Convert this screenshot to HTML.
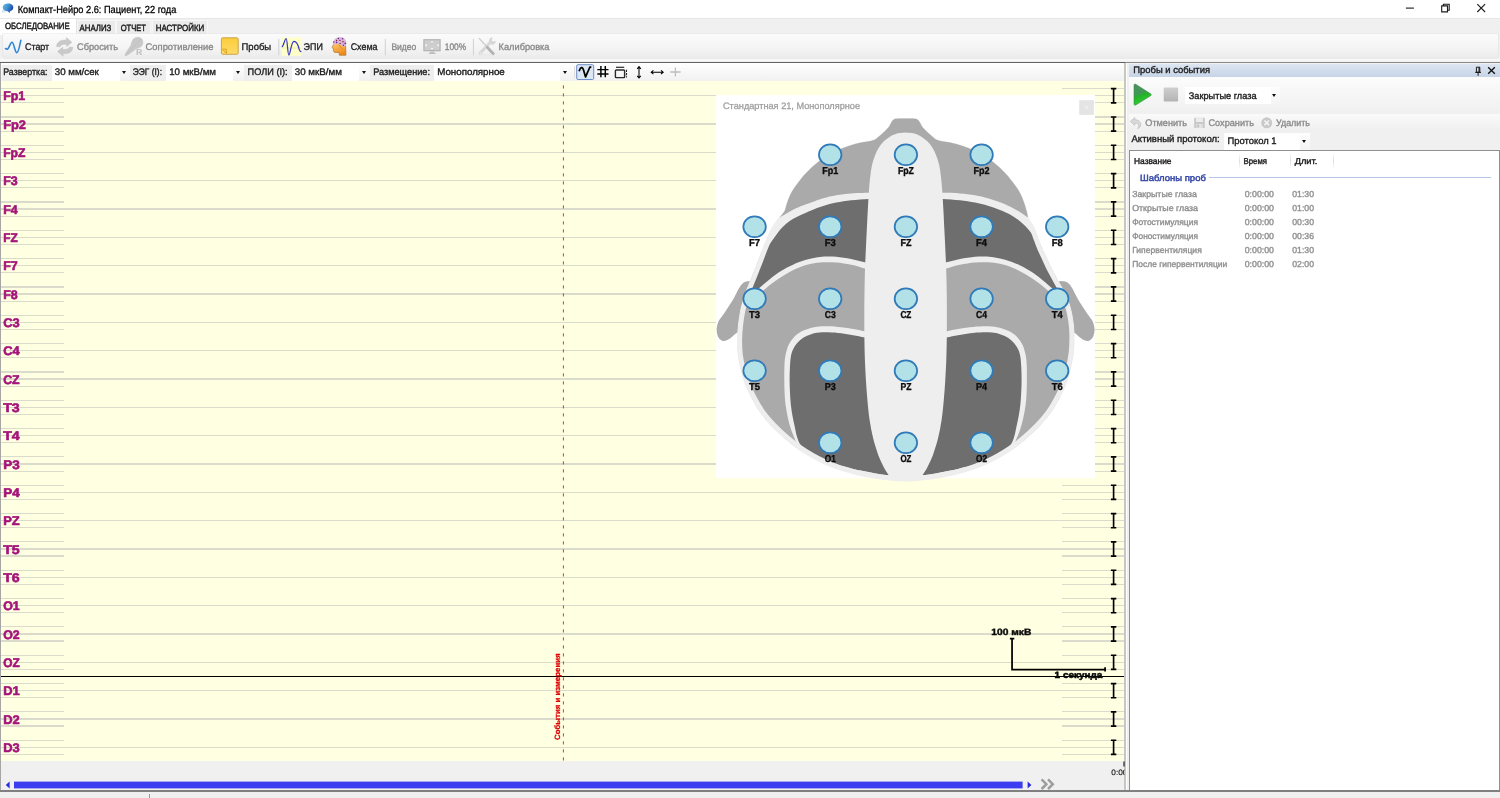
<!DOCTYPE html>
<html lang="ru"><head><meta charset="utf-8"><title>EEG</title>
<style>

html,body{margin:0;padding:0;}
body{width:1500px;height:798px;overflow:hidden;background:#f0f0f0;position:relative;
 font-family:"Liberation Sans",sans-serif;}
.a{position:absolute;}
.txt{will-change:transform;}
.txt text{font-family:"Liberation Sans",sans-serif;text-rendering:geometricPrecision;white-space:pre;stroke-linejoin:round;}
svg{position:absolute;overflow:visible;}
#title{left:0;top:0;width:1500px;height:18px;background:#fff;}
#tabs{left:0;top:18px;width:1500px;height:17px;background:#f0f0f0;}
.tab{position:absolute;top:20.2px;height:13.6px;background:#ebebeb;border:1px solid #f6f6f6;border-bottom:none;box-sizing:border-box;}
#tab0{left:0;top:18.5px;width:76.6px;height:16px;background:#fff;border-right:1px solid #e2e2e2;box-sizing:border-box;}
#tb1{left:2.5px;top:34px;width:1495px;height:24.4px;background:linear-gradient(#fbfbfb,#f4f4f4 60%,#ebebeb);border-radius:0 0 3px 3px;box-shadow:0 0 0 0.6px #e3e3e3;}
#tb1sh{left:0;top:59px;width:1500px;height:2px;background:#f7f7f7;}
#dark{left:0;top:61.5px;width:1125px;height:1.4px;background:#626262;}
#dark2{left:1125px;top:61.5px;width:375px;height:1.4px;background:#8a8a8a;}
#tb2{left:1.1px;top:63px;width:1122.8px;height:17.8px;background:linear-gradient(#ffffff,#f1f1f1);}
.lbl{position:absolute;top:65.3px;height:15.4px;background:#eeeeee;}
.cmb{position:absolute;top:63px;height:17.8px;background:#fff;}
.arr{position:absolute;width:0;height:0;border-left:2.6px solid transparent;border-right:2.6px solid transparent;border-top:3px solid #111;}
#eeg{left:1.2px;top:80.8px;width:1122.6px;height:680.2px;background:#ffffe1;overflow:hidden;}
#eegL{left:0;top:63px;width:1px;height:728px;background:#a6a6a6;}
#eegR{left:1123.8px;top:63px;width:2.1px;height:728px;background:#c7c7c2;}
#gap{left:1125.9px;top:63px;width:1.5px;height:735px;background:#fdfdfd;}
#below{left:1.1px;top:761px;width:1122.8px;height:30px;background:#f0f0f0;}
#botline{left:0;top:790px;width:1500px;height:1.7px;background:#808080;}
#status{left:0;top:791.7px;width:1500px;height:6.3px;background:#f0f0f0;}
.hl{position:absolute;left:0;width:1122.8px;height:1.2px;background:#dbdbcb;}
.sl{position:absolute;left:0;width:62.8px;height:1.2px;background:#dbdbcb;}
.sr{position:absolute;left:1060.8px;width:62px;height:1.2px;background:#dbdbcb;}
#panel{left:714.8px;top:14.2px;width:378.6px;height:383.4px;background:#fff;}
#rp{left:1128px;top:63px;width:372px;height:735px;background:#f0f0f0;}
#rphead{left:1129px;top:64px;width:371px;height:13px;background:linear-gradient(#dde6f1,#c6d4e6);}
#rptop{left:1129px;top:77px;width:371px;height:36px;background:linear-gradient(#fcfcfc,#f0f0f0);}
#rptb{left:1129px;top:114px;width:371px;height:17px;background:linear-gradient(#fafafa,#efefef);}
#list{left:1128.5px;top:149.6px;width:371.5px;height:641px;background:#fff;border:1px solid #8f8f8f;border-bottom:none;box-sizing:border-box;}
.colsep{position:absolute;top:153px;width:1px;height:16px;background:linear-gradient(#fff,#dcdcdc,#fff);}

</style></head>
<body>

<div class="a" id="title"></div>
<div class="a" id="tabs"></div>
<div class="tab" style="left:77px;width:38.6px"></div>
<div class="tab" style="left:116.4px;width:35px"></div>
<div class="tab" style="left:152px;width:55.8px"></div>
<div class="a" id="tab0"></div>
<div class="a" style="left:0;top:18px;width:1500px;height:1px;background:#e7e7e7"></div>
<div class="a" id="tb1"></div>
<div class="a" id="tb1sh"></div>
<div class="a" id="dark"></div><div class="a" id="dark2"></div>
<div class="a" id="tb2"></div>
<div class="lbl" style="left:2px;width:50px"></div>
<div class="cmb" style="left:52px;width:68px"></div>
<div class="lbl" style="left:130px;width:36px"></div>
<div class="cmb" style="left:166px;width:67px"></div>
<div class="lbl" style="left:244px;width:48px"></div>
<div class="cmb" style="left:292px;width:67px"></div>
<div class="lbl" style="left:370px;width:64px"></div>
<div class="cmb" style="left:434px;width:126px"></div>
<div class="arr" style="left:122.2px;top:71px"></div>
<div class="arr" style="left:236.4px;top:71px"></div>
<div class="arr" style="left:362.2px;top:71px"></div>
<div class="arr" style="left:563.4px;top:71px"></div>

<div class="a" id="eeg">
<div class="hl" style="top:14.32px"></div>
<div class="sl" style="top:7.22px"></div>
<div class="sr" style="top:7.22px"></div>
<div class="sl" style="top:21.42px"></div>
<div class="sr" style="top:21.42px"></div>
<div class="hl" style="top:42.65px"></div>
<div class="sl" style="top:35.55px"></div>
<div class="sr" style="top:35.55px"></div>
<div class="sl" style="top:49.75px"></div>
<div class="sr" style="top:49.75px"></div>
<div class="hl" style="top:70.98px"></div>
<div class="sl" style="top:63.88px"></div>
<div class="sr" style="top:63.88px"></div>
<div class="sl" style="top:78.08px"></div>
<div class="sr" style="top:78.08px"></div>
<div class="hl" style="top:99.31px"></div>
<div class="sl" style="top:92.21px"></div>
<div class="sr" style="top:92.21px"></div>
<div class="sl" style="top:106.41px"></div>
<div class="sr" style="top:106.41px"></div>
<div class="hl" style="top:127.64px"></div>
<div class="sl" style="top:120.54px"></div>
<div class="sr" style="top:120.54px"></div>
<div class="sl" style="top:134.74px"></div>
<div class="sr" style="top:134.74px"></div>
<div class="hl" style="top:155.97px"></div>
<div class="sl" style="top:148.87px"></div>
<div class="sr" style="top:148.87px"></div>
<div class="sl" style="top:163.07px"></div>
<div class="sr" style="top:163.07px"></div>
<div class="hl" style="top:184.30px"></div>
<div class="sl" style="top:177.20px"></div>
<div class="sr" style="top:177.20px"></div>
<div class="sl" style="top:191.40px"></div>
<div class="sr" style="top:191.40px"></div>
<div class="hl" style="top:212.63px"></div>
<div class="sl" style="top:205.53px"></div>
<div class="sr" style="top:205.53px"></div>
<div class="sl" style="top:219.73px"></div>
<div class="sr" style="top:219.73px"></div>
<div class="hl" style="top:240.96px"></div>
<div class="sl" style="top:233.86px"></div>
<div class="sr" style="top:233.86px"></div>
<div class="sl" style="top:248.06px"></div>
<div class="sr" style="top:248.06px"></div>
<div class="hl" style="top:269.29px"></div>
<div class="sl" style="top:262.19px"></div>
<div class="sr" style="top:262.19px"></div>
<div class="sl" style="top:276.39px"></div>
<div class="sr" style="top:276.39px"></div>
<div class="hl" style="top:297.62px"></div>
<div class="sl" style="top:290.52px"></div>
<div class="sr" style="top:290.52px"></div>
<div class="sl" style="top:304.72px"></div>
<div class="sr" style="top:304.72px"></div>
<div class="hl" style="top:325.95px"></div>
<div class="sl" style="top:318.85px"></div>
<div class="sr" style="top:318.85px"></div>
<div class="sl" style="top:333.05px"></div>
<div class="sr" style="top:333.05px"></div>
<div class="hl" style="top:354.28px"></div>
<div class="sl" style="top:347.18px"></div>
<div class="sr" style="top:347.18px"></div>
<div class="sl" style="top:361.38px"></div>
<div class="sr" style="top:361.38px"></div>
<div class="hl" style="top:382.61px"></div>
<div class="sl" style="top:375.51px"></div>
<div class="sr" style="top:375.51px"></div>
<div class="sl" style="top:389.71px"></div>
<div class="sr" style="top:389.71px"></div>
<div class="hl" style="top:410.94px"></div>
<div class="sl" style="top:403.84px"></div>
<div class="sr" style="top:403.84px"></div>
<div class="sl" style="top:418.04px"></div>
<div class="sr" style="top:418.04px"></div>
<div class="hl" style="top:439.27px"></div>
<div class="sl" style="top:432.17px"></div>
<div class="sr" style="top:432.17px"></div>
<div class="sl" style="top:446.37px"></div>
<div class="sr" style="top:446.37px"></div>
<div class="hl" style="top:467.60px"></div>
<div class="sl" style="top:460.50px"></div>
<div class="sr" style="top:460.50px"></div>
<div class="sl" style="top:474.70px"></div>
<div class="sr" style="top:474.70px"></div>
<div class="hl" style="top:495.93px"></div>
<div class="sl" style="top:488.83px"></div>
<div class="sr" style="top:488.83px"></div>
<div class="sl" style="top:503.03px"></div>
<div class="sr" style="top:503.03px"></div>
<div class="hl" style="top:524.26px"></div>
<div class="sl" style="top:517.16px"></div>
<div class="sr" style="top:517.16px"></div>
<div class="sl" style="top:531.36px"></div>
<div class="sr" style="top:531.36px"></div>
<div class="hl" style="top:552.59px"></div>
<div class="sl" style="top:545.49px"></div>
<div class="sr" style="top:545.49px"></div>
<div class="sl" style="top:559.69px"></div>
<div class="sr" style="top:559.69px"></div>
<div class="hl" style="top:580.92px"></div>
<div class="sl" style="top:573.82px"></div>
<div class="sr" style="top:573.82px"></div>
<div class="sl" style="top:588.02px"></div>
<div class="sr" style="top:588.02px"></div>
<div class="hl" style="top:609.25px"></div>
<div class="sl" style="top:602.15px"></div>
<div class="sr" style="top:602.15px"></div>
<div class="sl" style="top:616.35px"></div>
<div class="sr" style="top:616.35px"></div>
<div class="hl" style="top:637.58px"></div>
<div class="sl" style="top:630.48px"></div>
<div class="sr" style="top:630.48px"></div>
<div class="sl" style="top:644.68px"></div>
<div class="sr" style="top:644.68px"></div>
<div class="hl" style="top:665.91px"></div>
<div class="sl" style="top:658.81px"></div>
<div class="sr" style="top:658.81px"></div>
<div class="sl" style="top:673.01px"></div>
<div class="sr" style="top:673.01px"></div>
<div class="a" style="left:0;top:594.75px;width:1123px;height:1.9px;background:#000"></div>
<div class="a" id="panel"></div>
</div>
<div class="a" id="below"></div>
<div class="a" id="eegL"></div>
<div class="a" id="eegR"></div>
<svg class="a" style="left:0;top:0" width="1500" height="798" viewBox="0 0 1500 798">
<g stroke="#000" stroke-width="1.65" fill="none">
<path d="M1110.90 88.62H1116.30M1110.90 102.82H1116.30M1113.60 88.62V102.82"/>
<path d="M1110.90 116.95H1116.30M1110.90 131.15H1116.30M1113.60 116.95V131.15"/>
<path d="M1110.90 145.28H1116.30M1110.90 159.48H1116.30M1113.60 145.28V159.48"/>
<path d="M1110.90 173.61H1116.30M1110.90 187.81H1116.30M1113.60 173.61V187.81"/>
<path d="M1110.90 201.94H1116.30M1110.90 216.14H1116.30M1113.60 201.94V216.14"/>
<path d="M1110.90 230.27H1116.30M1110.90 244.47H1116.30M1113.60 230.27V244.47"/>
<path d="M1110.90 258.60H1116.30M1110.90 272.80H1116.30M1113.60 258.60V272.80"/>
<path d="M1110.90 286.93H1116.30M1110.90 301.13H1116.30M1113.60 286.93V301.13"/>
<path d="M1110.90 315.26H1116.30M1110.90 329.46H1116.30M1113.60 315.26V329.46"/>
<path d="M1110.90 343.59H1116.30M1110.90 357.79H1116.30M1113.60 343.59V357.79"/>
<path d="M1110.90 371.92H1116.30M1110.90 386.12H1116.30M1113.60 371.92V386.12"/>
<path d="M1110.90 400.25H1116.30M1110.90 414.45H1116.30M1113.60 400.25V414.45"/>
<path d="M1110.90 428.58H1116.30M1110.90 442.78H1116.30M1113.60 428.58V442.78"/>
<path d="M1110.90 456.91H1116.30M1110.90 471.11H1116.30M1113.60 456.91V471.11"/>
<path d="M1110.90 485.24H1116.30M1110.90 499.44H1116.30M1113.60 485.24V499.44"/>
<path d="M1110.90 513.57H1116.30M1110.90 527.77H1116.30M1113.60 513.57V527.77"/>
<path d="M1110.90 541.90H1116.30M1110.90 556.10H1116.30M1113.60 541.90V556.10"/>
<path d="M1110.90 570.23H1116.30M1110.90 584.43H1116.30M1113.60 570.23V584.43"/>
<path d="M1110.90 598.56H1116.30M1110.90 612.76H1116.30M1113.60 598.56V612.76"/>
<path d="M1110.90 626.89H1116.30M1110.90 641.09H1116.30M1113.60 626.89V641.09"/>
<path d="M1110.90 655.22H1116.30M1110.90 669.42H1116.30M1113.60 655.22V669.42"/>
<path d="M1110.90 683.55H1116.30M1110.90 697.75H1116.30M1113.60 683.55V697.75"/>
<path d="M1110.90 711.88H1116.30M1110.90 726.08H1116.30M1113.60 711.88V726.08"/>
<path d="M1110.90 740.21H1116.30M1110.90 754.41H1116.30M1113.60 740.21V754.41"/>
</g></svg>

<svg class="a" style="left:0;top:0" width="1500" height="798" viewBox="0 0 1500 798">
<defs><clipPath id="hc"><path d="M905.6 118.6C908.1 118.6 911.0 118.4 913.0 118.6C915.0 118.8 916.3 118.8 917.5 119.6C918.7 120.4 919.4 121.9 920.3 123.2C921.2 124.5 921.7 126.2 922.8 127.6C923.9 129.0 925.5 130.4 927.0 131.8C928.5 133.2 930.2 134.8 932.0 136.2C933.8 137.6 935.0 139.2 938.0 140.3C941.0 141.4 945.9 141.7 950.0 142.6C954.1 143.5 958.5 144.6 962.7 146.0C966.9 147.4 970.8 149.0 975.0 151.0C979.2 153.0 983.8 155.4 987.7 158.0C991.6 160.6 995.5 163.8 998.5 166.5C1001.5 169.2 1003.9 171.8 1006.0 174.0C1008.1 176.2 1009.4 178.0 1011.0 180.0C1012.6 182.0 1014.2 184.0 1015.6 186.0C1017.0 188.0 1018.4 190.0 1019.5 192.0C1020.6 194.0 1021.5 196.0 1022.3 198.0C1023.1 200.0 1023.8 201.8 1024.5 204.0C1025.2 206.2 1026.0 208.7 1026.6 211.0C1027.2 213.3 1027.4 215.7 1028.1 217.6C1028.8 219.5 1030.0 220.8 1031.0 222.6C1032.0 224.3 1033.0 225.5 1034.2 228.1C1035.4 230.7 1036.7 234.6 1037.9 237.9C1039.2 241.2 1040.3 244.4 1041.7 247.7C1043.1 250.9 1044.7 254.1 1046.2 257.4C1047.7 260.6 1049.2 264.2 1050.7 267.2C1052.2 270.2 1053.7 272.7 1055.2 275.5C1056.7 278.3 1058.2 281.1 1059.7 283.8C1061.2 286.6 1062.8 289.2 1064.2 292.0C1065.6 294.8 1066.8 297.0 1068.0 300.5C1069.2 304.0 1070.6 308.6 1071.5 313.0C1072.4 317.4 1073.2 322.5 1073.6 327.0C1074.0 331.5 1074.1 335.3 1074.0 340.0C1073.9 344.7 1073.7 350.0 1073.0 355.0C1072.3 360.0 1071.3 365.0 1070.0 370.0C1068.7 375.0 1067.3 380.1 1065.4 385.0C1063.5 389.9 1061.0 394.8 1058.5 399.5C1056.0 404.2 1053.7 408.4 1050.4 413.0C1047.1 417.6 1042.7 422.6 1038.5 427.0C1034.3 431.4 1029.2 436.0 1025.0 439.6C1020.8 443.2 1017.2 446.0 1013.0 448.9C1008.8 451.8 1004.2 454.7 1000.0 457.1C995.8 459.5 992.2 461.4 988.0 463.3C983.8 465.2 979.3 467.1 975.0 468.6C970.7 470.2 966.2 471.4 962.0 472.6C957.8 473.8 954.2 474.7 950.0 475.6C945.8 476.5 941.2 477.3 937.0 478.0C932.8 478.7 930.2 479.1 925.0 479.6C919.8 480.1 912.1 481.0 905.6 481.0C899.1 481.0 891.4 480.1 886.2 479.6C881.0 479.1 878.4 478.7 874.2 478.0C870.0 477.3 865.4 476.5 861.2 475.6C857.0 474.7 853.4 473.8 849.2 472.6C845.0 471.4 840.5 470.2 836.2 468.6C831.9 467.1 827.4 465.2 823.2 463.3C819.0 461.4 815.4 459.5 811.2 457.1C807.0 454.7 802.4 451.8 798.2 448.9C794.0 446.0 790.5 443.2 786.2 439.6C782.0 436.0 776.9 431.4 772.7 427.0C768.5 422.6 764.1 417.6 760.8 413.0C757.5 408.4 755.2 404.2 752.7 399.5C750.2 394.8 747.7 389.9 745.8 385.0C743.9 380.1 742.5 375.0 741.2 370.0C739.9 365.0 738.8 360.0 738.2 355.0C737.6 350.0 737.4 345.2 737.5 340.0C737.6 334.8 738.0 329.2 738.6 324.0C739.2 318.8 740.0 313.7 741.0 309.0C742.0 304.3 743.3 299.9 744.6 296.0C745.9 292.1 747.3 288.6 748.6 285.3C749.9 282.0 751.2 278.8 752.3 276.2C753.3 273.6 754.0 271.8 754.9 269.5C755.8 267.2 756.5 265.4 757.6 262.7C758.7 259.9 760.0 256.2 761.3 253.0C762.5 249.8 764.0 245.9 765.1 243.2C766.2 240.4 767.0 238.8 768.0 236.5C769.0 234.2 769.9 231.9 771.1 229.6C772.4 227.3 774.1 224.5 775.5 222.5C776.9 220.5 777.9 219.5 779.4 217.6C780.9 215.7 783.4 213.3 784.6 211.0C785.8 208.7 786.0 206.2 786.7 204.0C787.4 201.8 788.1 200.0 788.9 198.0C789.7 196.0 790.6 194.0 791.7 192.0C792.8 190.0 794.2 188.0 795.6 186.0C797.0 184.0 798.6 182.0 800.2 180.0C801.8 178.0 803.1 176.2 805.2 174.0C807.3 171.8 809.7 169.2 812.7 166.5C815.8 163.8 819.6 160.6 823.5 158.0C827.4 155.4 832.0 153.0 836.2 151.0C840.4 149.0 844.3 147.4 848.5 146.0C852.7 144.6 857.1 143.5 861.2 142.6C865.3 141.7 870.2 141.4 873.2 140.3C876.2 139.2 877.4 137.6 879.2 136.2C881.0 134.8 882.7 133.2 884.2 131.8C885.7 130.4 887.3 129.0 888.4 127.6C889.5 126.2 890.0 124.5 890.9 123.2C891.8 121.9 892.5 120.4 893.7 119.6C894.9 118.8 896.2 118.8 898.2 118.6C900.2 118.4 903.1 118.6 905.6 118.6Z"/></clipPath></defs>
<path d="M1058.0 283.0C1059.3 279.9 1062.0 281.1 1063.8 281.2C1065.6 281.3 1067.2 282.2 1068.6 283.4C1070.0 284.6 1070.9 286.0 1072.4 288.6C1073.9 291.2 1075.6 295.2 1077.8 299.0C1080.0 302.8 1083.5 308.0 1085.8 311.4C1088.1 314.8 1090.2 317.3 1091.6 319.6C1093.0 321.9 1093.5 323.5 1094.0 325.4C1094.5 327.3 1094.7 329.1 1094.5 331.0C1094.3 332.9 1093.8 335.4 1093.0 337.0C1092.2 338.6 1090.9 339.8 1089.6 340.4C1088.3 341.0 1086.6 341.1 1085.0 340.6C1083.4 340.1 1081.7 338.9 1080.0 337.6C1078.3 336.3 1076.6 334.3 1074.6 333.0C1072.6 331.7 1070.4 332.2 1068.0 330.0C1065.6 327.8 1062.0 325.0 1060.0 320.0C1058.0 315.0 1056.3 306.2 1056.0 300.0C1055.7 293.8 1056.7 286.1 1058.0 283.0Z" fill="#aaaaaa"/><path d="M753.2 283.0C751.9 279.9 749.2 281.1 747.4 281.2C745.6 281.3 744.0 282.2 742.6 283.4C741.2 284.6 740.3 286.0 738.8 288.6C737.3 291.2 735.6 295.2 733.4 299.0C731.2 302.8 727.7 308.0 725.4 311.4C723.1 314.8 721.0 317.3 719.6 319.6C718.2 321.9 717.7 323.5 717.2 325.4C716.7 327.3 716.5 329.1 716.7 331.0C716.9 332.9 717.4 335.4 718.2 337.0C719.0 338.6 720.3 339.8 721.6 340.4C722.9 341.0 724.6 341.1 726.2 340.6C727.8 340.1 729.5 338.9 731.2 337.6C732.9 336.3 734.6 334.3 736.6 333.0C738.6 331.7 740.8 332.2 743.2 330.0C745.6 327.8 749.2 325.0 751.2 320.0C753.2 315.0 754.9 306.2 755.2 300.0C755.5 293.8 754.5 286.1 753.2 283.0Z" fill="#aaaaaa"/>
<path d="M905.6 118.6C908.1 118.6 911.0 118.4 913.0 118.6C915.0 118.8 916.3 118.8 917.5 119.6C918.7 120.4 919.4 121.9 920.3 123.2C921.2 124.5 921.7 126.2 922.8 127.6C923.9 129.0 925.5 130.4 927.0 131.8C928.5 133.2 930.2 134.8 932.0 136.2C933.8 137.6 935.0 139.2 938.0 140.3C941.0 141.4 945.9 141.7 950.0 142.6C954.1 143.5 958.5 144.6 962.7 146.0C966.9 147.4 970.8 149.0 975.0 151.0C979.2 153.0 983.8 155.4 987.7 158.0C991.6 160.6 995.5 163.8 998.5 166.5C1001.5 169.2 1003.9 171.8 1006.0 174.0C1008.1 176.2 1009.4 178.0 1011.0 180.0C1012.6 182.0 1014.2 184.0 1015.6 186.0C1017.0 188.0 1018.4 190.0 1019.5 192.0C1020.6 194.0 1021.5 196.0 1022.3 198.0C1023.1 200.0 1023.8 201.8 1024.5 204.0C1025.2 206.2 1026.0 208.7 1026.6 211.0C1027.2 213.3 1027.4 215.7 1028.1 217.6C1028.8 219.5 1030.0 220.8 1031.0 222.6C1032.0 224.3 1033.0 225.5 1034.2 228.1C1035.4 230.7 1036.7 234.6 1037.9 237.9C1039.2 241.2 1040.3 244.4 1041.7 247.7C1043.1 250.9 1044.7 254.1 1046.2 257.4C1047.7 260.6 1049.2 264.2 1050.7 267.2C1052.2 270.2 1053.7 272.7 1055.2 275.5C1056.7 278.3 1058.2 281.1 1059.7 283.8C1061.2 286.6 1062.8 289.2 1064.2 292.0C1065.6 294.8 1066.8 297.0 1068.0 300.5C1069.2 304.0 1070.6 308.6 1071.5 313.0C1072.4 317.4 1073.2 322.5 1073.6 327.0C1074.0 331.5 1074.1 335.3 1074.0 340.0C1073.9 344.7 1073.7 350.0 1073.0 355.0C1072.3 360.0 1071.3 365.0 1070.0 370.0C1068.7 375.0 1067.3 380.1 1065.4 385.0C1063.5 389.9 1061.0 394.8 1058.5 399.5C1056.0 404.2 1053.7 408.4 1050.4 413.0C1047.1 417.6 1042.7 422.6 1038.5 427.0C1034.3 431.4 1029.2 436.0 1025.0 439.6C1020.8 443.2 1017.2 446.0 1013.0 448.9C1008.8 451.8 1004.2 454.7 1000.0 457.1C995.8 459.5 992.2 461.4 988.0 463.3C983.8 465.2 979.3 467.1 975.0 468.6C970.7 470.2 966.2 471.4 962.0 472.6C957.8 473.8 954.2 474.7 950.0 475.6C945.8 476.5 941.2 477.3 937.0 478.0C932.8 478.7 930.2 479.1 925.0 479.6C919.8 480.1 912.1 481.0 905.6 481.0C899.1 481.0 891.4 480.1 886.2 479.6C881.0 479.1 878.4 478.7 874.2 478.0C870.0 477.3 865.4 476.5 861.2 475.6C857.0 474.7 853.4 473.8 849.2 472.6C845.0 471.4 840.5 470.2 836.2 468.6C831.9 467.1 827.4 465.2 823.2 463.3C819.0 461.4 815.4 459.5 811.2 457.1C807.0 454.7 802.4 451.8 798.2 448.9C794.0 446.0 790.5 443.2 786.2 439.6C782.0 436.0 776.9 431.4 772.7 427.0C768.5 422.6 764.1 417.6 760.8 413.0C757.5 408.4 755.2 404.2 752.7 399.5C750.2 394.8 747.7 389.9 745.8 385.0C743.9 380.1 742.5 375.0 741.2 370.0C739.9 365.0 738.8 360.0 738.2 355.0C737.6 350.0 737.4 345.2 737.5 340.0C737.6 334.8 738.0 329.2 738.6 324.0C739.2 318.8 740.0 313.7 741.0 309.0C742.0 304.3 743.3 299.9 744.6 296.0C745.9 292.1 747.3 288.6 748.6 285.3C749.9 282.0 751.2 278.8 752.3 276.2C753.3 273.6 754.0 271.8 754.9 269.5C755.8 267.2 756.5 265.4 757.6 262.7C758.7 259.9 760.0 256.2 761.3 253.0C762.5 249.8 764.0 245.9 765.1 243.2C766.2 240.4 767.0 238.8 768.0 236.5C769.0 234.2 769.9 231.9 771.1 229.6C772.4 227.3 774.1 224.5 775.5 222.5C776.9 220.5 777.9 219.5 779.4 217.6C780.9 215.7 783.4 213.3 784.6 211.0C785.8 208.7 786.0 206.2 786.7 204.0C787.4 201.8 788.1 200.0 788.9 198.0C789.7 196.0 790.6 194.0 791.7 192.0C792.8 190.0 794.2 188.0 795.6 186.0C797.0 184.0 798.6 182.0 800.2 180.0C801.8 178.0 803.1 176.2 805.2 174.0C807.3 171.8 809.7 169.2 812.7 166.5C815.8 163.8 819.6 160.6 823.5 158.0C827.4 155.4 832.0 153.0 836.2 151.0C840.4 149.0 844.3 147.4 848.5 146.0C852.7 144.6 857.1 143.5 861.2 142.6C865.3 141.7 870.2 141.4 873.2 140.3C876.2 139.2 877.4 137.6 879.2 136.2C881.0 134.8 882.7 133.2 884.2 131.8C885.7 130.4 887.3 129.0 888.4 127.6C889.5 126.2 890.0 124.5 890.9 123.2C891.8 121.9 892.5 120.4 893.7 119.6C894.9 118.8 896.2 118.8 898.2 118.6C900.2 118.4 903.1 118.6 905.6 118.6Z" fill="#eeeeee"/>
<g clip-path="url(#hc)">
<path d="M930.0 273.5C932.6 272.7 940.6 270.2 945.6 268.8C950.6 267.4 955.1 265.8 960.0 264.8C964.9 263.8 970.3 263.0 975.0 262.6C979.7 262.2 983.8 262.1 988.0 262.3C992.2 262.5 996.0 262.9 1000.0 263.8C1004.0 264.7 1007.8 265.9 1012.0 267.6C1016.2 269.3 1020.3 271.3 1025.0 274.0C1029.7 276.7 1035.8 280.9 1040.0 284.0C1044.2 287.1 1046.3 289.2 1050.0 292.5C1053.7 295.8 1057.3 299.1 1062.0 304.0C1066.7 308.9 1075.3 319.0 1078.0 322.0L1090.0 340.0L1085.0 420.0L1040.0 460.0C1006.9 460.0 1009.9 453.6 1011.5 450.0C1013.1 446.4 1014.4 443.7 1015.8 440.4C1017.2 437.1 1018.8 433.7 1020.0 430.0C1021.2 426.3 1022.4 422.2 1023.3 418.0C1024.2 413.8 1025.0 409.2 1025.6 405.0C1026.1 400.8 1026.4 397.3 1026.6 392.8C1026.8 388.3 1026.9 383.0 1026.9 378.0C1026.9 373.0 1026.9 366.9 1026.6 362.7C1026.3 358.5 1025.9 355.9 1025.2 353.0C1024.5 350.1 1023.9 347.6 1022.6 345.0C1021.3 342.4 1019.5 339.7 1017.5 337.5C1015.5 335.3 1012.9 333.3 1010.3 331.8C1007.7 330.3 1005.0 329.3 1002.0 328.4C999.0 327.5 995.2 327.0 992.0 326.6C988.8 326.2 986.4 326.1 982.7 326.2C979.0 326.3 974.1 326.7 970.0 327.2C965.9 327.7 962.0 328.3 958.0 329.0C954.0 329.7 950.7 330.4 946.0 331.4C941.3 332.4 932.7 334.4 930.0 335.0Z" fill="#aaaaaa"/><path d="M881.2 273.5C878.6 272.7 870.6 270.2 865.6 268.8C860.6 267.4 856.1 265.8 851.2 264.8C846.3 263.8 840.9 263.0 836.2 262.6C831.5 262.2 827.4 262.1 823.2 262.3C819.0 262.5 815.2 262.9 811.2 263.8C807.2 264.7 803.4 265.9 799.2 267.6C795.0 269.3 790.9 271.3 786.2 274.0C781.5 276.7 775.4 280.9 771.2 284.0C767.0 287.1 764.9 289.2 761.2 292.5C757.5 295.8 753.9 299.1 749.2 304.0C744.5 308.9 735.9 319.0 733.2 322.0L721.2 340.0L726.2 420.0L771.2 460.0C804.3 460.0 801.3 453.6 799.7 450.0C798.1 446.4 796.8 443.7 795.4 440.4C794.0 437.1 792.5 433.7 791.2 430.0C790.0 426.3 788.8 422.2 787.9 418.0C787.0 413.8 786.2 409.2 785.6 405.0C785.1 400.8 784.8 397.3 784.6 392.8C784.4 388.3 784.3 383.0 784.3 378.0C784.3 373.0 784.3 366.9 784.6 362.7C784.9 358.5 785.3 355.9 786.0 353.0C786.7 350.1 787.3 347.6 788.6 345.0C789.9 342.4 791.7 339.7 793.7 337.5C795.8 335.3 798.3 333.3 800.9 331.8C803.5 330.3 806.2 329.3 809.2 328.4C812.2 327.5 816.0 327.0 819.2 326.6C822.4 326.2 824.8 326.1 828.5 326.2C832.2 326.3 837.1 326.7 841.2 327.2C845.3 327.7 849.2 328.3 853.2 329.0C857.2 329.7 860.5 330.4 865.2 331.4C869.9 332.4 878.5 334.4 881.2 335.0Z" fill="#aaaaaa"/>
<path d="M930.0 198.6C932.1 198.7 937.6 198.7 942.6 199.0C947.6 199.3 954.6 199.7 960.0 200.3C965.4 200.9 970.3 201.7 975.0 202.6C979.7 203.5 983.8 204.6 988.0 205.8C992.2 207.0 996.3 208.5 1000.0 210.0C1003.7 211.5 1006.8 212.8 1010.0 214.6C1013.2 216.4 1016.0 218.2 1019.0 220.6C1022.0 223.0 1024.5 225.1 1028.0 229.0C1031.5 232.9 1038.0 241.5 1040.0 244.0L1085.0 260.0L1085.0 312.0C1072.8 309.4 1065.7 300.3 1062.0 296.5C1058.3 292.7 1056.2 291.7 1053.0 289.0C1049.8 286.3 1046.2 283.1 1043.0 280.5C1039.8 277.9 1037.0 275.7 1034.0 273.6C1031.0 271.5 1028.7 269.9 1025.0 268.0C1021.3 266.1 1016.2 263.5 1012.0 261.9C1007.8 260.3 1004.2 259.3 1000.0 258.4C995.8 257.5 991.2 256.9 987.0 256.6C982.8 256.3 979.5 256.3 975.0 256.7C970.5 257.1 964.9 258.0 960.0 259.0C955.1 260.0 950.6 261.3 945.6 262.6C940.6 263.9 932.6 266.3 930.0 267.0Z" fill="#6f6e6e"/><path d="M881.2 198.6C879.1 198.7 873.6 198.7 868.6 199.0C863.6 199.3 856.6 199.7 851.2 200.3C845.8 200.9 840.9 201.7 836.2 202.6C831.5 203.5 827.4 204.7 823.2 206.0C819.0 207.3 814.9 208.9 811.2 210.4C807.5 211.9 804.5 213.2 801.2 214.8C797.9 216.4 794.5 217.8 791.2 220.0C787.9 222.2 784.4 225.2 781.5 228.2C778.6 231.2 776.6 234.4 774.0 238.0C771.4 241.6 767.3 248.0 766.0 250.0L726.2 260.0L726.2 312.0C738.4 309.4 745.5 300.3 749.2 296.5C752.9 292.7 755.0 291.7 758.2 289.0C761.4 286.3 765.0 283.1 768.2 280.5C771.4 277.9 774.2 275.7 777.2 273.6C780.2 271.5 782.5 269.9 786.2 268.0C789.9 266.1 795.0 263.5 799.2 261.9C803.4 260.3 807.0 259.3 811.2 258.4C815.4 257.5 820.0 256.9 824.2 256.6C828.4 256.3 831.7 256.3 836.2 256.7C840.7 257.1 846.3 258.0 851.2 259.0C856.1 260.0 860.6 261.3 865.6 262.6C870.6 263.9 878.6 266.3 881.2 267.0Z" fill="#6f6e6e"/>
<path d="M930.0 341.5C932.7 340.9 941.3 338.7 946.0 337.6C950.7 336.6 954.0 335.9 958.0 335.2C962.0 334.5 965.9 333.7 970.0 333.2C974.1 332.7 979.0 332.3 982.7 332.2C986.4 332.1 989.1 332.3 992.0 332.6C994.9 332.9 997.3 333.3 1000.0 334.2C1002.7 335.1 1005.7 336.3 1008.0 337.8C1010.3 339.3 1012.3 341.1 1014.0 343.0C1015.7 344.9 1017.1 347.2 1018.2 349.5C1019.3 351.8 1019.9 353.9 1020.4 357.0C1020.9 360.1 1021.1 364.2 1021.3 368.0C1021.5 371.8 1021.6 375.8 1021.6 380.0C1021.6 384.2 1021.4 388.8 1021.2 393.0C1021.0 397.2 1020.7 401.5 1020.3 405.3C1019.9 409.1 1019.3 412.6 1018.7 416.0C1018.1 419.4 1017.3 422.7 1016.6 426.0C1015.9 429.3 1015.3 433.0 1014.4 436.0C1013.5 439.0 1012.7 441.6 1011.2 444.0C1009.7 446.4 1007.3 448.6 1005.4 450.2C1003.5 451.8 1002.9 452.0 1000.0 453.6C997.1 455.2 992.0 458.2 988.0 460.0C984.0 461.8 980.0 463.0 976.0 464.2C972.0 465.4 968.3 466.3 964.0 467.4C959.7 468.5 954.8 469.6 950.0 470.6C945.2 471.6 940.0 472.7 935.0 473.6C930.0 474.5 924.8 475.3 920.0 475.8C915.2 476.3 908.3 476.6 906.0 476.8L906.0 341.5Z" fill="#6f6e6e"/><path d="M881.2 341.5C878.5 340.9 869.9 338.7 865.2 337.6C860.5 336.6 857.2 335.9 853.2 335.2C849.2 334.5 845.3 333.7 841.2 333.2C837.1 332.7 832.2 332.3 828.5 332.2C824.8 332.1 822.1 332.3 819.2 332.6C816.3 332.9 813.9 333.3 811.2 334.2C808.5 335.1 805.5 336.3 803.2 337.8C800.9 339.3 798.9 341.1 797.2 343.0C795.5 344.9 794.1 347.2 793.0 349.5C791.9 351.8 791.3 353.9 790.8 357.0C790.3 360.1 790.1 364.2 789.9 368.0C789.7 371.8 789.6 375.8 789.6 380.0C789.6 384.2 789.8 388.8 790.0 393.0C790.2 397.2 790.5 401.5 790.9 405.3C791.3 409.1 791.9 412.6 792.5 416.0C793.1 419.4 793.9 422.7 794.6 426.0C795.3 429.3 795.9 433.0 796.8 436.0C797.7 439.0 798.5 441.6 800.0 444.0C801.5 446.4 803.9 448.6 805.8 450.2C807.7 451.8 808.3 452.0 811.2 453.6C814.1 455.2 819.2 458.2 823.2 460.0C827.2 461.8 831.2 463.0 835.2 464.2C839.2 465.4 842.9 466.3 847.2 467.4C851.5 468.5 856.4 469.6 861.2 470.6C866.0 471.6 871.2 472.7 876.2 473.6C881.2 474.5 886.4 475.3 891.2 475.8C896.0 476.3 902.9 476.6 905.2 476.8L905.2 341.5Z" fill="#6f6e6e"/>
<path d="M905.6 118.6C908.1 118.6 911.0 118.4 913.0 118.6C915.0 118.8 916.3 118.8 917.5 119.6C918.7 120.4 919.4 121.9 920.3 123.2C921.2 124.5 921.7 126.2 922.8 127.6C923.9 129.0 925.5 130.4 927.0 131.8C928.5 133.2 930.2 134.8 932.0 136.2C933.8 137.6 935.0 139.2 938.0 140.3C941.0 141.4 945.9 141.7 950.0 142.6C954.1 143.5 958.5 144.6 962.7 146.0C966.9 147.4 970.8 149.0 975.0 151.0C979.2 153.0 983.8 155.4 987.7 158.0C991.6 160.6 995.5 163.8 998.5 166.5C1001.5 169.2 1003.9 171.8 1006.0 174.0C1008.1 176.2 1009.4 178.0 1011.0 180.0C1012.6 182.0 1014.2 184.0 1015.6 186.0C1017.0 188.0 1018.4 190.0 1019.5 192.0C1020.6 194.0 1021.5 196.0 1022.3 198.0C1023.1 200.0 1023.8 201.8 1024.5 204.0C1025.2 206.2 1026.0 208.7 1026.6 211.0C1027.2 213.3 1027.4 215.7 1028.1 217.6C1028.8 219.5 1030.0 220.8 1031.0 222.6C1032.0 224.3 1033.0 225.5 1034.2 228.1C1035.4 230.7 1036.7 234.6 1037.9 237.9C1039.2 241.2 1040.3 244.4 1041.7 247.7C1043.1 250.9 1044.7 254.1 1046.2 257.4C1047.7 260.6 1049.2 264.2 1050.7 267.2C1052.2 270.2 1053.7 272.7 1055.2 275.5C1056.7 278.3 1058.2 281.1 1059.7 283.8C1061.2 286.6 1062.8 289.2 1064.2 292.0C1065.6 294.8 1066.8 297.0 1068.0 300.5C1069.2 304.0 1070.6 308.6 1071.5 313.0C1072.4 317.4 1073.2 322.5 1073.6 327.0C1074.0 331.5 1074.1 335.3 1074.0 340.0C1073.9 344.7 1073.7 350.0 1073.0 355.0C1072.3 360.0 1071.3 365.0 1070.0 370.0C1068.7 375.0 1067.3 380.1 1065.4 385.0C1063.5 389.9 1061.0 394.8 1058.5 399.5C1056.0 404.2 1053.7 408.4 1050.4 413.0C1047.1 417.6 1042.7 422.6 1038.5 427.0C1034.3 431.4 1029.2 436.0 1025.0 439.6C1020.8 443.2 1017.2 446.0 1013.0 448.9C1008.8 451.8 1004.2 454.7 1000.0 457.1C995.8 459.5 992.2 461.4 988.0 463.3C983.8 465.2 979.3 467.1 975.0 468.6C970.7 470.2 966.2 471.4 962.0 472.6C957.8 473.8 954.2 474.7 950.0 475.6C945.8 476.5 941.2 477.3 937.0 478.0C932.8 478.7 930.2 479.1 925.0 479.6C919.8 480.1 912.1 481.0 905.6 481.0C899.1 481.0 891.4 480.1 886.2 479.6C881.0 479.1 878.4 478.7 874.2 478.0C870.0 477.3 865.4 476.5 861.2 475.6C857.0 474.7 853.4 473.8 849.2 472.6C845.0 471.4 840.5 470.2 836.2 468.6C831.9 467.1 827.4 465.2 823.2 463.3C819.0 461.4 815.4 459.5 811.2 457.1C807.0 454.7 802.4 451.8 798.2 448.9C794.0 446.0 790.5 443.2 786.2 439.6C782.0 436.0 776.9 431.4 772.7 427.0C768.5 422.6 764.1 417.6 760.8 413.0C757.5 408.4 755.2 404.2 752.7 399.5C750.2 394.8 747.7 389.9 745.8 385.0C743.9 380.1 742.5 375.0 741.2 370.0C739.9 365.0 738.8 360.0 738.2 355.0C737.6 350.0 737.4 345.2 737.5 340.0C737.6 334.8 738.0 329.2 738.6 324.0C739.2 318.8 740.0 313.7 741.0 309.0C742.0 304.3 743.3 299.9 744.6 296.0C745.9 292.1 747.3 288.6 748.6 285.3C749.9 282.0 751.2 278.8 752.3 276.2C753.3 273.6 754.0 271.8 754.9 269.5C755.8 267.2 756.5 265.4 757.6 262.7C758.7 259.9 760.0 256.2 761.3 253.0C762.5 249.8 764.0 245.9 765.1 243.2C766.2 240.4 767.0 238.8 768.0 236.5C769.0 234.2 769.9 231.9 771.1 229.6C772.4 227.3 774.1 224.5 775.5 222.5C776.9 220.5 777.9 219.5 779.4 217.6C780.9 215.7 783.4 213.3 784.6 211.0C785.8 208.7 786.0 206.2 786.7 204.0C787.4 201.8 788.1 200.0 788.9 198.0C789.7 196.0 790.6 194.0 791.7 192.0C792.8 190.0 794.2 188.0 795.6 186.0C797.0 184.0 798.6 182.0 800.2 180.0C801.8 178.0 803.1 176.2 805.2 174.0C807.3 171.8 809.7 169.2 812.7 166.5C815.8 163.8 819.6 160.6 823.5 158.0C827.4 155.4 832.0 153.0 836.2 151.0C840.4 149.0 844.3 147.4 848.5 146.0C852.7 144.6 857.1 143.5 861.2 142.6C865.3 141.7 870.2 141.4 873.2 140.3C876.2 139.2 877.4 137.6 879.2 136.2C881.0 134.8 882.7 133.2 884.2 131.8C885.7 130.4 887.3 129.0 888.4 127.6C889.5 126.2 890.0 124.5 890.9 123.2C891.8 121.9 892.5 120.4 893.7 119.6C894.9 118.8 896.2 118.8 898.2 118.6C900.2 118.4 903.1 118.6 905.6 118.6Z" fill="none" stroke="#eeeeee" stroke-width="9.2"/>
</g>
<path d="M905.6 118.6C908.1 118.6 911.0 118.4 913.0 118.6C915.0 118.8 916.3 118.8 917.5 119.6C918.7 120.4 919.4 121.9 920.3 123.2C921.2 124.5 921.7 126.2 922.8 127.6C923.9 129.0 925.5 130.4 927.0 131.8C928.5 133.2 930.2 134.8 932.0 136.2C933.8 137.6 935.0 139.2 938.0 140.3C941.0 141.4 945.9 141.7 950.0 142.6C954.1 143.5 958.5 144.6 962.7 146.0C966.9 147.4 970.8 149.0 975.0 151.0C979.2 153.0 983.8 155.4 987.7 158.0C991.6 160.6 995.5 163.8 998.5 166.5C1001.5 169.2 1003.9 171.8 1006.0 174.0C1008.1 176.2 1009.4 178.0 1011.0 180.0C1012.6 182.0 1014.2 184.0 1015.6 186.0C1017.0 188.0 1018.4 190.0 1019.5 192.0C1020.6 194.0 1021.5 196.0 1022.3 198.0C1023.1 200.0 1023.8 201.8 1024.5 204.0C1025.2 206.2 1026.0 208.7 1026.6 211.0C1027.2 213.3 1027.4 215.7 1028.1 217.6C1028.8 219.5 1030.0 220.8 1031.0 222.6C1032.0 224.3 1033.0 225.5 1034.2 228.1C1035.4 230.7 1036.7 234.6 1037.9 237.9C1039.2 241.2 1040.3 244.4 1041.7 247.7C1043.1 250.9 1044.7 254.1 1046.2 257.4C1047.7 260.6 1049.2 264.2 1050.7 267.2C1052.2 270.2 1053.7 272.7 1055.2 275.5C1056.7 278.3 1058.2 281.1 1059.7 283.8C1061.2 286.6 1062.8 289.2 1064.2 292.0C1065.6 294.8 1066.8 297.0 1068.0 300.5C1069.2 304.0 1070.6 308.6 1071.5 313.0C1072.4 317.4 1073.2 322.5 1073.6 327.0C1074.0 331.5 1074.1 335.3 1074.0 340.0C1073.9 344.7 1073.7 350.0 1073.0 355.0C1072.3 360.0 1071.3 365.0 1070.0 370.0C1068.7 375.0 1067.3 380.1 1065.4 385.0C1063.5 389.9 1061.0 394.8 1058.5 399.5C1056.0 404.2 1053.7 408.4 1050.4 413.0C1047.1 417.6 1042.7 422.6 1038.5 427.0C1034.3 431.4 1029.2 436.0 1025.0 439.6C1020.8 443.2 1017.2 446.0 1013.0 448.9C1008.8 451.8 1004.2 454.7 1000.0 457.1C995.8 459.5 992.2 461.4 988.0 463.3C983.8 465.2 979.3 467.1 975.0 468.6C970.7 470.2 966.2 471.4 962.0 472.6C957.8 473.8 954.2 474.7 950.0 475.6C945.8 476.5 941.2 477.3 937.0 478.0C932.8 478.7 930.2 479.1 925.0 479.6C919.8 480.1 912.1 481.0 905.6 481.0C899.1 481.0 891.4 480.1 886.2 479.6C881.0 479.1 878.4 478.7 874.2 478.0C870.0 477.3 865.4 476.5 861.2 475.6C857.0 474.7 853.4 473.8 849.2 472.6C845.0 471.4 840.5 470.2 836.2 468.6C831.9 467.1 827.4 465.2 823.2 463.3C819.0 461.4 815.4 459.5 811.2 457.1C807.0 454.7 802.4 451.8 798.2 448.9C794.0 446.0 790.5 443.2 786.2 439.6C782.0 436.0 776.9 431.4 772.7 427.0C768.5 422.6 764.1 417.6 760.8 413.0C757.5 408.4 755.2 404.2 752.7 399.5C750.2 394.8 747.7 389.9 745.8 385.0C743.9 380.1 742.5 375.0 741.2 370.0C739.9 365.0 738.8 360.0 738.2 355.0C737.6 350.0 737.4 345.2 737.5 340.0C737.6 334.8 738.0 329.2 738.6 324.0C739.2 318.8 740.0 313.7 741.0 309.0C742.0 304.3 743.3 299.9 744.6 296.0C745.9 292.1 747.3 288.6 748.6 285.3C749.9 282.0 751.2 278.8 752.3 276.2C753.3 273.6 754.0 271.8 754.9 269.5C755.8 267.2 756.5 265.4 757.6 262.7C758.7 259.9 760.0 256.2 761.3 253.0C762.5 249.8 764.0 245.9 765.1 243.2C766.2 240.4 767.0 238.8 768.0 236.5C769.0 234.2 769.9 231.9 771.1 229.6C772.4 227.3 774.1 224.5 775.5 222.5C776.9 220.5 777.9 219.5 779.4 217.6C780.9 215.7 783.4 213.3 784.6 211.0C785.8 208.7 786.0 206.2 786.7 204.0C787.4 201.8 788.1 200.0 788.9 198.0C789.7 196.0 790.6 194.0 791.7 192.0C792.8 190.0 794.2 188.0 795.6 186.0C797.0 184.0 798.6 182.0 800.2 180.0C801.8 178.0 803.1 176.2 805.2 174.0C807.3 171.8 809.7 169.2 812.7 166.5C815.8 163.8 819.6 160.6 823.5 158.0C827.4 155.4 832.0 153.0 836.2 151.0C840.4 149.0 844.3 147.4 848.5 146.0C852.7 144.6 857.1 143.5 861.2 142.6C865.3 141.7 870.2 141.4 873.2 140.3C876.2 139.2 877.4 137.6 879.2 136.2C881.0 134.8 882.7 133.2 884.2 131.8C885.7 130.4 887.3 129.0 888.4 127.6C889.5 126.2 890.0 124.5 890.9 123.2C891.8 121.9 892.5 120.4 893.7 119.6C894.9 118.8 896.2 118.8 898.2 118.6C900.2 118.4 903.1 118.6 905.6 118.6Z" fill="none" stroke="#eeeeee" stroke-width="1"/>
<path d="M905.6 118.6C906.8 118.6 911.0 118.4 913.0 118.6C915.0 118.8 916.3 118.8 917.5 119.6C918.7 120.4 919.4 121.9 920.3 123.2C921.2 124.5 921.7 126.2 922.8 127.6C923.9 129.0 925.5 130.4 927.0 131.8C928.5 133.2 930.2 134.8 932.0 136.2C933.8 137.6 935.0 139.2 938.0 140.3C941.0 141.4 945.9 141.7 950.0 142.6C954.1 143.5 958.5 144.6 962.7 146.0C966.9 147.4 970.8 149.0 975.0 151.0C979.2 153.0 983.8 155.4 987.7 158.0C991.6 160.6 995.5 163.8 998.5 166.5C1001.5 169.2 1003.9 171.8 1006.0 174.0C1008.1 176.2 1009.4 178.0 1011.0 180.0C1012.6 182.0 1014.2 184.0 1015.6 186.0C1017.0 188.0 1018.4 190.0 1019.5 192.0C1020.6 194.0 1021.5 196.0 1022.3 198.0C1023.1 200.0 1023.8 201.8 1024.5 204.0C1025.2 206.2 1026.0 208.7 1026.6 211.0C1027.2 213.3 1027.8 216.5 1028.1 217.6C1026.6 216.6 1022.0 213.4 1019.0 211.6C1016.0 209.8 1013.2 208.2 1010.0 206.6C1006.8 205.0 1003.7 203.6 1000.0 202.2C996.3 200.8 992.2 199.4 988.0 198.2C983.8 197.0 979.7 196.0 975.0 195.2C970.3 194.4 965.4 193.8 960.0 193.4C954.6 193.0 951.7 192.9 942.6 192.7C933.5 192.5 911.8 192.1 905.6 192.0C865.7 192.8 856.6 193.0 851.2 193.4C845.8 193.8 840.9 194.4 836.2 195.2C831.5 196.0 827.4 197.0 823.2 198.2C819.0 199.4 814.9 201.1 811.2 202.4C807.5 203.7 804.5 204.6 801.2 206.0C797.9 207.4 794.1 209.3 791.2 210.8C788.3 212.3 786.0 213.9 784.0 215.0C782.0 216.1 780.2 217.2 779.4 217.6C780.3 216.5 783.4 213.3 784.6 211.0C785.8 208.7 786.0 206.2 786.7 204.0C787.4 201.8 788.1 200.0 788.9 198.0C789.7 196.0 790.6 194.0 791.7 192.0C792.8 190.0 794.2 188.0 795.6 186.0C797.0 184.0 798.6 182.0 800.2 180.0C801.8 178.0 803.1 176.2 805.2 174.0C807.3 171.8 809.7 169.2 812.7 166.5C815.8 163.8 819.6 160.6 823.5 158.0C827.4 155.4 832.0 153.0 836.2 151.0C840.4 149.0 844.3 147.4 848.5 146.0C852.7 144.6 857.1 143.5 861.2 142.6C865.3 141.7 870.2 141.4 873.2 140.3C876.2 139.2 877.4 137.6 879.2 136.2C881.0 134.8 882.7 133.2 884.2 131.8C885.7 130.4 887.3 129.0 888.4 127.6C889.5 126.2 890.0 124.5 890.9 123.2C891.8 121.9 892.5 120.4 893.7 119.6C894.9 118.8 896.2 118.8 898.2 118.6C900.2 118.4 904.4 118.6 905.6 118.6Z" fill="#aaaaaa"/>
<g clip-path="url(#hc)"><path d="M905.6 132.4C906.9 132.6 910.9 132.6 913.5 133.3C916.1 134.0 918.6 135.0 921.0 136.4C923.4 137.8 925.7 139.7 927.6 141.6C929.5 143.5 931.1 145.6 932.6 148.0C934.1 150.4 935.3 153.1 936.4 156.0C937.5 158.9 938.5 162.0 939.3 165.5C940.1 169.0 940.5 172.9 941.0 177.0C941.5 181.1 941.8 184.5 942.2 190.0C942.6 195.5 943.0 203.3 943.4 210.0C943.8 216.7 944.0 222.5 944.4 230.0C944.8 237.5 945.2 246.7 945.6 255.0C946.0 263.3 946.3 270.8 946.5 280.0C946.7 289.2 946.9 300.3 946.9 310.0C946.9 319.7 946.9 329.7 946.8 338.0C946.7 346.3 946.5 353.0 946.3 360.0C946.0 367.0 945.7 373.3 945.3 380.0C944.9 386.7 944.4 393.3 943.8 400.0C943.2 406.7 942.6 413.6 941.6 420.0C940.6 426.4 939.5 432.6 938.0 438.5C936.5 444.4 934.5 450.6 932.8 455.4C931.0 460.1 929.1 463.8 927.5 467.0C925.9 470.2 924.5 472.0 923.0 474.5C921.5 477.0 919.2 480.8 918.5 482.0L892.7 482.0C892.0 480.8 889.7 477.0 888.2 474.5C886.7 472.0 885.3 470.2 883.7 467.0C882.1 463.8 880.2 460.1 878.4 455.4C876.7 450.6 874.7 444.4 873.2 438.5C871.7 432.6 870.6 426.4 869.6 420.0C868.6 413.6 868.0 406.7 867.4 400.0C866.8 393.3 866.3 386.7 865.9 380.0C865.5 373.3 865.2 367.0 864.9 360.0C864.7 353.0 864.5 346.3 864.4 338.0C864.3 329.7 864.3 319.7 864.3 310.0C864.4 300.3 864.5 289.2 864.7 280.0C864.9 270.8 865.2 263.3 865.6 255.0C866.0 246.7 866.4 237.5 866.8 230.0C867.2 222.5 867.4 216.7 867.8 210.0C868.2 203.3 868.6 195.5 869.0 190.0C869.4 184.5 869.7 181.1 870.2 177.0C870.7 172.9 871.1 169.0 871.9 165.5C872.7 162.0 873.7 158.9 874.8 156.0C875.9 153.1 877.1 150.4 878.6 148.0C880.1 145.6 881.7 143.5 883.6 141.6C885.5 139.7 887.9 137.8 890.2 136.4C892.6 135.0 896.5 133.8 897.7 133.3Z" fill="#eeeeee"/></g>
<g fill="#b2e1e8" stroke="#2f7ab8" stroke-width="1.75">
<ellipse cx="830.2" cy="154.7" rx="11.25" ry="10.4"/>
<ellipse cx="905.9" cy="154.7" rx="11.25" ry="10.4"/>
<ellipse cx="981.6" cy="154.7" rx="11.25" ry="10.4"/>
<ellipse cx="754.6" cy="226.7" rx="11.25" ry="10.4"/>
<ellipse cx="830.2" cy="226.7" rx="11.25" ry="10.4"/>
<ellipse cx="905.9" cy="226.7" rx="11.25" ry="10.4"/>
<ellipse cx="981.6" cy="226.7" rx="11.25" ry="10.4"/>
<ellipse cx="1057.2" cy="226.7" rx="11.25" ry="10.4"/>
<ellipse cx="754.6" cy="298.7" rx="11.25" ry="10.4"/>
<ellipse cx="830.2" cy="298.7" rx="11.25" ry="10.4"/>
<ellipse cx="905.9" cy="298.7" rx="11.25" ry="10.4"/>
<ellipse cx="981.6" cy="298.7" rx="11.25" ry="10.4"/>
<ellipse cx="1057.2" cy="298.7" rx="11.25" ry="10.4"/>
<ellipse cx="754.6" cy="370.7" rx="11.25" ry="10.4"/>
<ellipse cx="830.2" cy="370.7" rx="11.25" ry="10.4"/>
<ellipse cx="905.9" cy="370.7" rx="11.25" ry="10.4"/>
<ellipse cx="981.6" cy="370.7" rx="11.25" ry="10.4"/>
<ellipse cx="1057.2" cy="370.7" rx="11.25" ry="10.4"/>
<ellipse cx="830.2" cy="442.7" rx="11.25" ry="10.4"/>
<ellipse cx="905.9" cy="442.7" rx="11.25" ry="10.4"/>
<ellipse cx="981.6" cy="442.7" rx="11.25" ry="10.4"/>
</g>
<rect x="1079.2" y="100.2" width="14.7" height="14.6" fill="#e4e4e4"/>
<path d="M1084.7 105.7l3.6 3.6M1088.3 105.7l-3.6 3.6" stroke="#f3f3f3" stroke-width="1" fill="none"/>
</svg>


<div class="a" id="rp"></div>
<div class="a" id="gap"></div>
<div class="a" id="rphead"></div>
<div class="a" id="rptop"></div>
<div class="a" id="rptb"></div>
<div class="cmb" style="left:1185.3px;top:86.7px;width:85.5px;height:17px"></div>
<div class="a" style="left:1270.8px;top:86.7px;width:9.5px;height:17px;background:linear-gradient(#fdfdfd,#f4f4f4)"></div>
<div class="arr" style="left:1272.2px;top:94px"></div>
<div class="cmb" style="left:1224px;top:132.5px;width:76px;height:17px"></div>
<div class="a" style="left:1300px;top:132.5px;width:10px;height:17px;background:linear-gradient(#fdfdfd,#f4f4f4)"></div>
<div class="arr" style="left:1301.9px;top:139.6px"></div>
<div class="a" id="list"></div>
<div class="a" id="botline"></div>
<div class="a" id="status"></div>
<div class="a" style="left:149px;top:794px;width:1px;height:4px;background:#9a9a9a"></div>
<div class="colsep" style="left:1239px"></div>
<div class="colsep" style="left:1289.5px"></div>
<div class="colsep" style="left:1332.5px"></div>
<div class="a" style="left:1209px;top:176.5px;width:282px;height:1px;background:#b9c7e6"></div>

<svg class="a" style="left:0;top:0" width="1500" height="798" viewBox="0 0 1500 798">
<defs>
<linearGradient id="gApp" x1="0" y1="0" x2="1" y2="0.4"><stop offset="0" stop-color="#69bfdc"/><stop offset="0.55" stop-color="#3f8fd0"/><stop offset="1" stop-color="#1c48ad"/></linearGradient>
<linearGradient id="gY" x1="0" y1="0" x2="0" y2="1"><stop offset="0" stop-color="#fbcd3a"/><stop offset="1" stop-color="#ffda66"/></linearGradient>
<linearGradient id="gPlay" x1="0" y1="0" x2="0.3" y2="1"><stop offset="0" stop-color="#4f8f63"/><stop offset="0.5" stop-color="#3f9a52"/><stop offset="0.62" stop-color="#23b427"/><stop offset="1" stop-color="#35cf35"/></linearGradient>
<linearGradient id="gStop" x1="0" y1="0" x2="0" y2="1"><stop offset="0" stop-color="#cfcfcf"/><stop offset="1" stop-color="#b3b3b3"/></linearGradient>
<linearGradient id="gHead" x1="0" y1="0" x2="0.3" y2="1"><stop offset="0" stop-color="#ffd27a"/><stop offset="1" stop-color="#f08a1e"/></linearGradient>
</defs>

<!-- app icon -->
<path d="M1.4 12.6C1.6 10.4 2.6 8.8 4.2 8.4L6 12.4Z" fill="#dfe6f2"/>
<path d="M2.6 7.4C2.8 4.6 5.6 3.2 8.4 3.4C11.4 3.4 13.4 5.2 13.3 7.4C13.3 9.4 12 10.6 10.4 10.9L9.3 12.9L7.9 11.2C5.4 11.4 3 10 2.6 7.4Z" fill="url(#gApp)"/>

<!-- window buttons -->
<g stroke="#1a1a1a" stroke-width="1.1" fill="none">
<path d="M1405.9 8.1H1413.9"/>
<path d="M1441.7 5.9H1447.5V11.9H1441.7Z"/><path d="M1443.4 5.9V4.2H1449.2V10.2H1447.5"/>
<path d="M1477.3 4.2L1485.1 12M1485.1 4.2L1477.3 12"/>
</g>

<!-- toolbar 1 -->
<path d="M5.5 48.5L7.1 49.3C8.7 49.5 10.3 42.3 12 42.3C13.9 42.3 14.9 52.7 16.8 52.7C18.6 52.7 19.8 45 20.8 40.3" stroke="#2d85d4" stroke-width="1.6" fill="none" stroke-linecap="round" stroke-linejoin="round"/>
<g fill="#c9c9c9" stroke="#bebebe" stroke-width="0.4">
<path id="rsA" d="M56.5 46.6C56.7 44 58 41.8 60.6 40.7C62.4 40 64.4 40 66.3 40.2L66.3 37.6L71.9 42.2L66.7 46.7L66.5 44.4C64.6 44.3 62.8 44.4 61.6 45C60.8 45.4 60.3 46 60 46.7Z"/>
<use href="#rsA" transform="rotate(180 64.7 46.9)"/>
<path d="M137.8 37.3C141 37.1 143 39.6 142.9 42.4C142.8 45.2 141 47.2 139.4 47.6L136.6 48.6L128.2 54.7L125.6 55.9L124.9 55.3L125.8 52.9L130.8 45.4C131.6 43.4 131.7 42 132.2 40.8C133 38.6 135.4 37.4 137.8 37.3Z"/>
</g>
<path d="M136.5 54.9V48.9H139.4C141.1 48.9 142 49.7 142 50.8C142 51.8 141.4 52.4 140.4 52.6L142.4 54.9H140.5L138.9 52.8H138V54.9ZM138 51.7H139.2C140.1 51.7 140.5 51.4 140.5 50.8C140.5 50.3 140.1 50 139.2 50H138Z" fill="#c2c2c2"/>
<path d="M127 53.8L141.4 38.6" stroke="#b9b9b9" stroke-width="0.5"/>
<rect x="221.4" y="37.8" width="16.8" height="16.5" rx="1.4" fill="url(#gY)" stroke="#c9a550" stroke-width="1"/>
<path d="M222.4 49.2H226.4V53.4M222.6 49.4L226.4 53.4" stroke="#dda526" stroke-width="1" fill="none"/>
<rect x="278.3" y="38.8" width="1" height="16.4" fill="#d2d2d2"/>
<rect x="281.9" y="37.4" width="19.4" height="18.3" fill="#ffffc8"/>
<path d="M282.4 48H300.8" stroke="#e4e4a8" stroke-width="0.8"/>
<path d="M282.2 46.7C283.6 46 284.8 38.6 286.1 38.5C287.4 38.5 287.6 55 288.9 55.1C290.4 55.1 291 41.4 294 41.3C297 41.3 298.4 45.6 299.2 49.4C299.6 50.8 300.2 51.4 300.9 51.6" stroke="#3838c6" stroke-width="1.25" fill="none" stroke-linecap="round"/>
<!-- schema head -->
<path d="M333.8 43.6L332.2 47.4L333.5 49.2L333.4 50.6L334.2 52.3L339 52.6L339.4 55.2H345.9L345.6 46L340 42Z" fill="url(#gHead)" stroke="#a87526" stroke-width="0.7" stroke-linejoin="round"/>
<path d="M338.4 44.6L342.6 49" stroke="#c98a20" stroke-width="0.9"/>
<path d="M333 45.2C332.8 40.4 335.6 37.2 339.8 37.1C344 37 346.6 40.2 346.4 43.4C346.3 45.4 345.4 46.6 343.8 46.4C342.2 46.4 341.2 45 339.6 44.4C337.6 43.6 335.2 44 333 45.2Z" fill="#d8b6d6"/>
<g fill="#6d2392"><circle cx="338.4" cy="38.6" r="0.75"/><circle cx="342.6" cy="38.8" r="0.75"/><circle cx="333.8" cy="42" r="0.75"/><circle cx="336.6" cy="42.4" r="0.8"/><circle cx="345.2" cy="43.4" r="0.8"/><circle cx="343.4" cy="45.2" r="0.7"/></g>
<g fill="#8a2250"><circle cx="336.6" cy="40.4" r="0.7"/><circle cx="340" cy="40.4" r="0.7"/><circle cx="343" cy="41.8" r="0.75"/><circle cx="340.2" cy="43.4" r="0.7"/></g>
<rect x="384.8" y="38.8" width="1" height="16.4" fill="#d2d2d2"/>
<!-- monitor -->
<rect x="423.3" y="39.1" width="17.4" height="12.2" fill="#b3b3b3"/>
<rect x="424.5" y="40.3" width="15" height="9.8" fill="#cdcdcd"/>
<g fill="#f2f2f2"><ellipse cx="432" cy="41.8" rx="1.3" ry="0.8"/><ellipse cx="432" cy="48.6" rx="1.3" ry="0.8"/><ellipse cx="426" cy="45.2" rx="0.8" ry="1.2"/><ellipse cx="438.2" cy="45.2" rx="0.8" ry="1.2"/></g>
<path d="M430.3 51.3H434L434.4 53.1H429.9Z" fill="#c4c4c4"/><rect x="428.7" y="52.9" width="6.9" height="1" fill="#b9b9b9"/>
<rect x="472.9" y="38.9" width="1.1" height="16.3" fill="#d4d4d4"/>
<!-- wrench / screwdriver -->
<g fill="none" stroke-linecap="round">
<path d="M480.2 53.1L490.2 42.4" stroke="#d8d8d8" stroke-width="3"/>
<path d="M490.6 43.4C488.8 42 488.8 39.4 490.6 38.2C491.2 37.8 491.8 37.7 492.2 37.8L491.4 40.4L493 42L495.2 41.2C495.4 42.6 494.6 43.8 493.4 44.2C492.4 44.5 491.4 44.2 490.6 43.4Z" fill="#d6d6d6" stroke="#d6d6d6" stroke-width="0.8"/>
<circle cx="480.6" cy="52.6" r="0.6" fill="#f4f4f4" stroke="none"/>
<path d="M479.3 38.5L486.8 46.8" stroke="#cfcfcf" stroke-width="1.3"/>
<path d="M487.4 47.4L493.2 53.8" stroke="#b2b2b2" stroke-width="2.9"/>
<path d="M478.8 54.7H492.6" stroke="#e4e4e4" stroke-width="0.7"/>
</g>

<!-- toolbar 2 icon buttons -->
<rect x="574" y="66" width="1" height="12" fill="#dedede"/>
<rect x="576.7" y="64.7" width="17" height="14.8" rx="1.2" fill="#dde6f3" stroke="#6d8fcb" stroke-width="1"/>
<path d="M579.1 71.2C579.9 68.6 581 67.4 582 67.6C583.6 68 584.2 73.4 585.6 76.9L589.9 67H591.3" stroke="#000" stroke-width="1.75" fill="none" stroke-linejoin="round"/>
<path d="M600.9 66V77.3M605.3 66V77.3M597.3 69.6H608.5M597.3 74H608.5" stroke="#000" stroke-width="1.45" fill="none"/>
<g stroke="#2a2a2a" fill="none"><rect x="615.4" y="70" width="9.2" height="7.6" rx="0.8" stroke-width="1.4"/><path d="M616 67.3H624.2" stroke-width="1.2"/><path d="M626.5 69.8V77.6" stroke-width="1.1" stroke-dasharray="2.2 1"/></g>
<g stroke="#000" stroke-width="1.05" fill="none"><path d="M639 66.8V77.8M637.2 68.8L639 66.6L640.8 68.8M637.2 75.8L639 78L640.8 75.8"/>
<path d="M651.4 72.2H663M653.4 70.3L651.2 72.2L653.4 74.1M661 70.3L663.2 72.2L661 74.1"/></g>
<path d="M675.4 67.6V76.4M670.2 72H680.6" stroke="#bdbdbd" stroke-width="1.3" fill="none"/>

<!-- red dashed marker line -->
<path d="M563.4 85.3V760.8" stroke="#cf3d3d" stroke-width="1" stroke-dasharray="3.2 4.8" fill="none"/>

<!-- calibration mark -->
<path d="M1012.05 638.4V669.55H1105.8M1009.9 638.5H1014.3M1105.1 667.3V671.6" stroke="#000" stroke-width="1.75" fill="none"/>
<path d="M1124 761.5V766.6" stroke="#222" stroke-width="1.2"/>

<!-- bottom scrollbar -->
<rect x="14" y="781.6" width="1008.6" height="6.8" fill="#3c3cf0"/>
<path d="M9.6 781.4V788.6L5.8 785Z" fill="#2a2adf"/>
<path d="M1027.6 781.4V788.6L1031.4 785Z" fill="#2a2adf"/>
<path d="M1041.6 779.4L1046.4 784.2L1041.6 789M1048 779.4L1052.8 784.2L1048 789" stroke="#9d9d9d" stroke-width="2.5" fill="none"/>

<!-- right panel header icons -->
<g stroke="#111" fill="none"><path d="M1476.4 67.2H1479.8V72.2H1476.4ZM1479 67.2V72.2M1475.2 72.4H1481M1478.1 72.4V75.8" stroke-width="0.95"/>
<path d="M1488.2 67.2L1494.8 73.8M1494.8 67.2L1488.2 73.8" stroke-width="1.35"/></g>
<path d="M1134.6 84.2C1134.2 84.4 1134 85 1134 85.6V103.8C1134 105 1134.8 105.6 1135.8 105L1150.6 95.8C1151.4 95.2 1151.4 94.4 1150.6 93.8L1136 84.4C1135.4 84 1135 84 1134.6 84.2Z" fill="url(#gPlay)" stroke="#2c7f3c" stroke-width="0.5"/>
<rect x="1163.7" y="87.4" width="14.4" height="14.2" rx="1" fill="url(#gStop)"/>
<!-- undo -->
<path d="M1130.4 121.4L1134.8 117.6V119.8C1138.4 119.8 1140.8 121.6 1140.8 124.4C1140.8 126.4 1139.6 127.8 1137.6 128.6C1138.6 127.4 1139 126.4 1138.6 125.2C1138.2 123.6 1136.8 123 1134.8 123V125.4Z" fill="#d9d9d9" stroke="#bdbdbd" stroke-width="0.7"/>
<!-- save -->
<path d="M1194.2 117.8H1204.8V128H1194.2Z" fill="#c9c9c9"/><rect x="1196" y="117.8" width="7" height="4.2" fill="#ececec"/><rect x="1196.4" y="124" width="6.2" height="4" fill="#e2e2e2"/><rect x="1197.4" y="124.8" width="1.6" height="2.6" fill="#bdbdbd"/>
<!-- delete -->
<circle cx="1266.7" cy="122.8" r="5.5" fill="#c9c9c9"/><path d="M1264.4 120.5L1269 125.1M1269 120.5L1264.4 125.1" stroke="#f4f4f4" stroke-width="1.5" fill="none"/>
</svg>

<svg class="a txt" style="left:0;top:0" width="1500" height="798" viewBox="0 0 1500 798">
<defs><clipPath id="cpT"><rect x="1100" y="760" width="24.4" height="30"/></clipPath></defs>
<text x="17.70" y="12.70" font-size="10.3" fill="#000" stroke="#000" stroke-width="0.28" textLength="158.60" lengthAdjust="spacingAndGlyphs">Компакт-Нейро 2.6: Пациент, 22 года</text>
<text x="4.90" y="28.80" font-size="9.0" fill="#1c1c1c" stroke="#1c1c1c" stroke-width="0.44" textLength="64.80" lengthAdjust="spacingAndGlyphs">ОБСЛЕДОВАНИЕ</text>
<text x="79.60" y="30.70" font-size="9.0" fill="#1c1c1c" stroke="#1c1c1c" stroke-width="0.44" textLength="31.70" lengthAdjust="spacingAndGlyphs">АНАЛИЗ</text>
<text x="120.70" y="30.70" font-size="9.0" fill="#1c1c1c" stroke="#1c1c1c" stroke-width="0.44" textLength="25.30" lengthAdjust="spacingAndGlyphs">ОТЧЕТ</text>
<text x="155.70" y="30.70" font-size="9.0" fill="#1c1c1c" stroke="#1c1c1c" stroke-width="0.44" textLength="48.60" lengthAdjust="spacingAndGlyphs">НАСТРОЙКИ</text>
<text x="25.00" y="49.90" font-size="9.7" fill="#1e1e1e" stroke="#1e1e1e" stroke-width="0.34" textLength="24.20" lengthAdjust="spacingAndGlyphs">Старт</text>
<text x="77.00" y="49.90" font-size="9.6" fill="#898989" stroke="#898989" stroke-width="0.34" textLength="41.00" lengthAdjust="spacingAndGlyphs">Сбросить</text>
<text x="145.60" y="49.90" font-size="9.6" fill="#898989" stroke="#898989" stroke-width="0.34" textLength="67.90" lengthAdjust="spacingAndGlyphs">Сопротивление</text>
<text x="241.50" y="49.90" font-size="9.7" fill="#1e1e1e" stroke="#1e1e1e" stroke-width="0.34" textLength="29.70" lengthAdjust="spacingAndGlyphs">Пробы</text>
<text x="303.60" y="49.90" font-size="9.7" fill="#1e1e1e" stroke="#1e1e1e" stroke-width="0.34" textLength="19.20" lengthAdjust="spacingAndGlyphs">ЭПИ</text>
<text x="350.70" y="49.90" font-size="9.7" fill="#1e1e1e" stroke="#1e1e1e" stroke-width="0.34" textLength="26.80" lengthAdjust="spacingAndGlyphs">Схема</text>
<text x="391.40" y="49.90" font-size="9.6" fill="#898989" stroke="#898989" stroke-width="0.34" textLength="24.90" lengthAdjust="spacingAndGlyphs">Видео</text>
<text x="444.80" y="49.90" font-size="9.6" fill="#898989" stroke="#898989" stroke-width="0.34" textLength="21.40" lengthAdjust="spacingAndGlyphs">100%</text>
<text x="498.60" y="49.90" font-size="9.6" fill="#898989" stroke="#898989" stroke-width="0.34" textLength="50.90" lengthAdjust="spacingAndGlyphs">Калибровка</text>
<text x="3.20" y="74.90" font-size="9.55" fill="#1e1e1e" stroke="#1e1e1e" stroke-width="0.38" textLength="44.40" lengthAdjust="spacingAndGlyphs">Развертка:</text>
<text x="54.80" y="74.90" font-size="9.55" fill="#1e1e1e" stroke="#1e1e1e" stroke-width="0.38" textLength="44.00" lengthAdjust="spacingAndGlyphs">30 мм/сек</text>
<text x="132.80" y="74.90" font-size="9.55" fill="#1e1e1e" stroke="#1e1e1e" stroke-width="0.38" textLength="29.20" lengthAdjust="spacingAndGlyphs">ЭЭГ (I):</text>
<text x="169.20" y="74.90" font-size="9.55" fill="#1e1e1e" stroke="#1e1e1e" stroke-width="0.38" textLength="46.80" lengthAdjust="spacingAndGlyphs">10 мкВ/мм</text>
<text x="247.60" y="74.90" font-size="9.55" fill="#1e1e1e" stroke="#1e1e1e" stroke-width="0.38" textLength="40.00" lengthAdjust="spacingAndGlyphs">ПОЛИ (I):</text>
<text x="294.80" y="74.90" font-size="9.55" fill="#1e1e1e" stroke="#1e1e1e" stroke-width="0.38" textLength="47.20" lengthAdjust="spacingAndGlyphs">30 мкВ/мм</text>
<text x="373.20" y="74.90" font-size="9.55" fill="#1e1e1e" stroke="#1e1e1e" stroke-width="0.38" textLength="56.80" lengthAdjust="spacingAndGlyphs">Размещение:</text>
<text x="437.20" y="74.90" font-size="9.55" fill="#1e1e1e" stroke="#1e1e1e" stroke-width="0.38" textLength="67.60" lengthAdjust="spacingAndGlyphs">Монополярное</text>
<text x="1133.30" y="73.40" font-size="9.55" fill="#1e1e1e" stroke="#1e1e1e" stroke-width="0.38" textLength="76.70" lengthAdjust="spacingAndGlyphs">Пробы и события</text>
<text x="1188.80" y="98.70" font-size="9.55" fill="#1e1e1e" stroke="#1e1e1e" stroke-width="0.38" textLength="67.70" lengthAdjust="spacingAndGlyphs">Закрытые глаза</text>
<text x="1145.30" y="125.90" font-size="9.55" fill="#898989" stroke="#898989" stroke-width="0.34" textLength="41.70" lengthAdjust="spacingAndGlyphs">Отменить</text>
<text x="1208.50" y="125.90" font-size="9.55" fill="#898989" stroke="#898989" stroke-width="0.34" textLength="45.50" lengthAdjust="spacingAndGlyphs">Сохранить</text>
<text x="1276.00" y="125.90" font-size="9.55" fill="#898989" stroke="#898989" stroke-width="0.34" textLength="34.00" lengthAdjust="spacingAndGlyphs">Удалить</text>
<text x="1131.50" y="142.00" font-size="9.55" fill="#1e1e1e" stroke="#1e1e1e" stroke-width="0.38" textLength="88.20" lengthAdjust="spacingAndGlyphs">Активный протокол:</text>
<text x="1227.50" y="144.00" font-size="9.55" fill="#1e1e1e" stroke="#1e1e1e" stroke-width="0.38" textLength="49.00" lengthAdjust="spacingAndGlyphs">Протокол 1</text>
<text x="1134.00" y="164.25" font-size="8.6" fill="#1e1e1e" stroke="#1e1e1e" stroke-width="0.40" textLength="37.50" lengthAdjust="spacingAndGlyphs">Название</text>
<text x="1243.50" y="164.25" font-size="8.6" fill="#1e1e1e" stroke="#1e1e1e" stroke-width="0.40" textLength="23.50" lengthAdjust="spacingAndGlyphs">Время</text>
<text x="1294.70" y="164.25" font-size="8.6" fill="#1e1e1e" stroke="#1e1e1e" stroke-width="0.40" textLength="22.60" lengthAdjust="spacingAndGlyphs">Длит.</text>
<text x="1140.00" y="180.60" font-size="8.95" fill="#3548a8" stroke="#3548a8" stroke-width="0.44" textLength="65.90" lengthAdjust="spacingAndGlyphs">Шаблоны проб</text>
<text x="723.00" y="109.30" font-size="9.4" fill="#a0a0a0" stroke="#a0a0a0" stroke-width="0.30" textLength="137.00" lengthAdjust="spacingAndGlyphs">Стандартная 21, Монополярное</text>
<text x="991.30" y="634.80" font-size="9.2" fill="#0a0a0a" font-weight="bold" stroke="#0a0a0a" stroke-width="0.40" textLength="40.00" lengthAdjust="spacingAndGlyphs">100 мкВ</text>
<text x="1054.60" y="677.90" font-size="9.2" fill="#0a0a0a" font-weight="bold" stroke="#0a0a0a" stroke-width="0.50" textLength="47.80" lengthAdjust="spacingAndGlyphs">1 секунда</text>
<text x="1111.30" y="775.30" font-size="7.8" fill="#222" stroke="#222" stroke-width="0.16" textLength="16.20" lengthAdjust="spacingAndGlyphs" clip-path="url(#cpT)">0:00</text>
<text x="560.40" y="740.00" font-size="7.7" fill="#de0000" font-weight="bold" stroke="#de0000" stroke-width="0.24" textLength="86.60" lengthAdjust="spacingAndGlyphs" transform="rotate(-90 560.40 740.00)">События и измерения</text>
<text x="1132.20" y="196.70" font-size="8.7" fill="#8f8f8f" stroke="#8f8f8f" stroke-width="0.36" textLength="64.60" lengthAdjust="spacingAndGlyphs">Закрытые глаза</text>
<text x="1244.70" y="196.70" font-size="8.7" fill="#8f8f8f" stroke="#8f8f8f" stroke-width="0.36" textLength="29.30" lengthAdjust="spacingAndGlyphs">0:00:00</text>
<text x="1292.30" y="196.70" font-size="8.7" fill="#8f8f8f" stroke="#8f8f8f" stroke-width="0.36" textLength="21.70" lengthAdjust="spacingAndGlyphs">01:30</text>
<text x="1132.20" y="210.75" font-size="8.7" fill="#8f8f8f" stroke="#8f8f8f" stroke-width="0.36" textLength="65.80" lengthAdjust="spacingAndGlyphs">Открытые глаза</text>
<text x="1244.70" y="210.75" font-size="8.7" fill="#8f8f8f" stroke="#8f8f8f" stroke-width="0.36" textLength="29.30" lengthAdjust="spacingAndGlyphs">0:00:00</text>
<text x="1292.30" y="210.75" font-size="8.7" fill="#8f8f8f" stroke="#8f8f8f" stroke-width="0.36" textLength="21.70" lengthAdjust="spacingAndGlyphs">01:00</text>
<text x="1132.20" y="224.80" font-size="8.7" fill="#8f8f8f" stroke="#8f8f8f" stroke-width="0.36" textLength="65.80" lengthAdjust="spacingAndGlyphs">Фотостимуляция</text>
<text x="1244.70" y="224.80" font-size="8.7" fill="#8f8f8f" stroke="#8f8f8f" stroke-width="0.36" textLength="29.30" lengthAdjust="spacingAndGlyphs">0:00:00</text>
<text x="1292.30" y="224.80" font-size="8.7" fill="#8f8f8f" stroke="#8f8f8f" stroke-width="0.36" textLength="21.70" lengthAdjust="spacingAndGlyphs">00:30</text>
<text x="1132.20" y="238.85" font-size="8.7" fill="#8f8f8f" stroke="#8f8f8f" stroke-width="0.36" textLength="65.80" lengthAdjust="spacingAndGlyphs">Фоностимуляция</text>
<text x="1244.70" y="238.85" font-size="8.7" fill="#8f8f8f" stroke="#8f8f8f" stroke-width="0.36" textLength="29.30" lengthAdjust="spacingAndGlyphs">0:00:00</text>
<text x="1292.30" y="238.85" font-size="8.7" fill="#8f8f8f" stroke="#8f8f8f" stroke-width="0.36" textLength="21.70" lengthAdjust="spacingAndGlyphs">00:36</text>
<text x="1132.20" y="252.90" font-size="8.7" fill="#8f8f8f" stroke="#8f8f8f" stroke-width="0.36" textLength="69.60" lengthAdjust="spacingAndGlyphs">Гипервентиляция</text>
<text x="1244.70" y="252.90" font-size="8.7" fill="#8f8f8f" stroke="#8f8f8f" stroke-width="0.36" textLength="29.30" lengthAdjust="spacingAndGlyphs">0:00:00</text>
<text x="1292.30" y="252.90" font-size="8.7" fill="#8f8f8f" stroke="#8f8f8f" stroke-width="0.36" textLength="21.70" lengthAdjust="spacingAndGlyphs">01:30</text>
<text x="1132.20" y="266.95" font-size="8.7" fill="#8f8f8f" stroke="#8f8f8f" stroke-width="0.36" textLength="95.00" lengthAdjust="spacingAndGlyphs">После гипервентиляции</text>
<text x="1244.70" y="266.95" font-size="8.7" fill="#8f8f8f" stroke="#8f8f8f" stroke-width="0.36" textLength="29.30" lengthAdjust="spacingAndGlyphs">0:00:00</text>
<text x="1292.30" y="266.95" font-size="8.7" fill="#8f8f8f" stroke="#8f8f8f" stroke-width="0.36" textLength="21.70" lengthAdjust="spacingAndGlyphs">02:00</text>
<text x="3.20" y="100.32" font-size="12.5" fill="#a4137a" font-weight="bold" stroke="#a4137a" stroke-width="0.60" textLength="22.00" lengthAdjust="spacingAndGlyphs">Fp1</text>
<text x="3.20" y="128.65" font-size="12.5" fill="#a4137a" font-weight="bold" stroke="#a4137a" stroke-width="0.60" textLength="22.80" lengthAdjust="spacingAndGlyphs">Fp2</text>
<text x="3.20" y="156.98" font-size="12.5" fill="#a4137a" font-weight="bold" stroke="#a4137a" stroke-width="0.60" textLength="22.30" lengthAdjust="spacingAndGlyphs">FpZ</text>
<text x="3.20" y="185.31" font-size="12.5" fill="#a4137a" font-weight="bold" stroke="#a4137a" stroke-width="0.60" textLength="14.50" lengthAdjust="spacingAndGlyphs">F3</text>
<text x="3.20" y="213.64" font-size="12.5" fill="#a4137a" font-weight="bold" stroke="#a4137a" stroke-width="0.60" textLength="14.50" lengthAdjust="spacingAndGlyphs">F4</text>
<text x="3.20" y="241.97" font-size="12.5" fill="#a4137a" font-weight="bold" stroke="#a4137a" stroke-width="0.60" textLength="14.50" lengthAdjust="spacingAndGlyphs">FZ</text>
<text x="3.20" y="270.30" font-size="12.5" fill="#a4137a" font-weight="bold" stroke="#a4137a" stroke-width="0.60" textLength="14.50" lengthAdjust="spacingAndGlyphs">F7</text>
<text x="3.20" y="298.63" font-size="12.5" fill="#a4137a" font-weight="bold" stroke="#a4137a" stroke-width="0.60" textLength="14.50" lengthAdjust="spacingAndGlyphs">F8</text>
<text x="3.20" y="326.96" font-size="12.5" fill="#a4137a" font-weight="bold" stroke="#a4137a" stroke-width="0.60" textLength="16.50" lengthAdjust="spacingAndGlyphs">C3</text>
<text x="3.20" y="355.29" font-size="12.5" fill="#a4137a" font-weight="bold" stroke="#a4137a" stroke-width="0.60" textLength="16.50" lengthAdjust="spacingAndGlyphs">C4</text>
<text x="3.20" y="383.62" font-size="12.5" fill="#a4137a" font-weight="bold" stroke="#a4137a" stroke-width="0.60" textLength="16.50" lengthAdjust="spacingAndGlyphs">CZ</text>
<text x="3.20" y="411.95" font-size="12.5" fill="#a4137a" font-weight="bold" stroke="#a4137a" stroke-width="0.60" textLength="16.50" lengthAdjust="spacingAndGlyphs">T3</text>
<text x="3.20" y="440.28" font-size="12.5" fill="#a4137a" font-weight="bold" stroke="#a4137a" stroke-width="0.60" textLength="16.50" lengthAdjust="spacingAndGlyphs">T4</text>
<text x="3.20" y="468.61" font-size="12.5" fill="#a4137a" font-weight="bold" stroke="#a4137a" stroke-width="0.60" textLength="16.50" lengthAdjust="spacingAndGlyphs">P3</text>
<text x="3.20" y="496.94" font-size="12.5" fill="#a4137a" font-weight="bold" stroke="#a4137a" stroke-width="0.60" textLength="16.50" lengthAdjust="spacingAndGlyphs">P4</text>
<text x="3.20" y="525.27" font-size="12.5" fill="#a4137a" font-weight="bold" stroke="#a4137a" stroke-width="0.60" textLength="16.50" lengthAdjust="spacingAndGlyphs">PZ</text>
<text x="3.20" y="553.60" font-size="12.5" fill="#a4137a" font-weight="bold" stroke="#a4137a" stroke-width="0.60" textLength="16.50" lengthAdjust="spacingAndGlyphs">T5</text>
<text x="3.20" y="581.93" font-size="12.5" fill="#a4137a" font-weight="bold" stroke="#a4137a" stroke-width="0.60" textLength="16.50" lengthAdjust="spacingAndGlyphs">T6</text>
<text x="3.20" y="610.26" font-size="12.5" fill="#a4137a" font-weight="bold" stroke="#a4137a" stroke-width="0.60" textLength="16.50" lengthAdjust="spacingAndGlyphs">O1</text>
<text x="3.20" y="638.59" font-size="12.5" fill="#a4137a" font-weight="bold" stroke="#a4137a" stroke-width="0.60" textLength="16.50" lengthAdjust="spacingAndGlyphs">O2</text>
<text x="3.20" y="666.92" font-size="12.5" fill="#a4137a" font-weight="bold" stroke="#a4137a" stroke-width="0.60" textLength="16.50" lengthAdjust="spacingAndGlyphs">OZ</text>
<text x="3.20" y="695.25" font-size="12.5" fill="#a4137a" font-weight="bold" stroke="#a4137a" stroke-width="0.60" textLength="16.50" lengthAdjust="spacingAndGlyphs">D1</text>
<text x="3.20" y="723.58" font-size="12.5" fill="#a4137a" font-weight="bold" stroke="#a4137a" stroke-width="0.60" textLength="16.50" lengthAdjust="spacingAndGlyphs">D2</text>
<text x="3.20" y="751.91" font-size="12.5" fill="#a4137a" font-weight="bold" stroke="#a4137a" stroke-width="0.60" textLength="16.50" lengthAdjust="spacingAndGlyphs">D3</text>
<text x="822.25" y="174.45" font-size="10.1" fill="#0c0c0c" font-weight="bold" stroke="#0c0c0c" stroke-width="0.36" textLength="16.00" lengthAdjust="spacingAndGlyphs">Fp1</text>
<text x="897.90" y="174.45" font-size="10.1" fill="#0c0c0c" font-weight="bold" stroke="#0c0c0c" stroke-width="0.36" textLength="16.00" lengthAdjust="spacingAndGlyphs">FpZ</text>
<text x="973.55" y="174.45" font-size="10.1" fill="#0c0c0c" font-weight="bold" stroke="#0c0c0c" stroke-width="0.36" textLength="16.00" lengthAdjust="spacingAndGlyphs">Fp2</text>
<text x="749.10" y="246.45" font-size="10.1" fill="#0c0c0c" font-weight="bold" stroke="#0c0c0c" stroke-width="0.36" textLength="11.00" lengthAdjust="spacingAndGlyphs">F7</text>
<text x="824.75" y="246.45" font-size="10.1" fill="#0c0c0c" font-weight="bold" stroke="#0c0c0c" stroke-width="0.36" textLength="11.00" lengthAdjust="spacingAndGlyphs">F3</text>
<text x="900.40" y="246.45" font-size="10.1" fill="#0c0c0c" font-weight="bold" stroke="#0c0c0c" stroke-width="0.36" textLength="11.00" lengthAdjust="spacingAndGlyphs">FZ</text>
<text x="976.05" y="246.45" font-size="10.1" fill="#0c0c0c" font-weight="bold" stroke="#0c0c0c" stroke-width="0.36" textLength="11.00" lengthAdjust="spacingAndGlyphs">F4</text>
<text x="1051.70" y="246.45" font-size="10.1" fill="#0c0c0c" font-weight="bold" stroke="#0c0c0c" stroke-width="0.36" textLength="11.00" lengthAdjust="spacingAndGlyphs">F8</text>
<text x="749.10" y="318.45" font-size="10.1" fill="#0c0c0c" font-weight="bold" stroke="#0c0c0c" stroke-width="0.36" textLength="11.00" lengthAdjust="spacingAndGlyphs">T3</text>
<text x="824.75" y="318.45" font-size="10.1" fill="#0c0c0c" font-weight="bold" stroke="#0c0c0c" stroke-width="0.36" textLength="11.00" lengthAdjust="spacingAndGlyphs">C3</text>
<text x="900.40" y="318.45" font-size="10.1" fill="#0c0c0c" font-weight="bold" stroke="#0c0c0c" stroke-width="0.36" textLength="11.00" lengthAdjust="spacingAndGlyphs">CZ</text>
<text x="976.05" y="318.45" font-size="10.1" fill="#0c0c0c" font-weight="bold" stroke="#0c0c0c" stroke-width="0.36" textLength="11.00" lengthAdjust="spacingAndGlyphs">C4</text>
<text x="1051.70" y="318.45" font-size="10.1" fill="#0c0c0c" font-weight="bold" stroke="#0c0c0c" stroke-width="0.36" textLength="11.00" lengthAdjust="spacingAndGlyphs">T4</text>
<text x="749.10" y="390.45" font-size="10.1" fill="#0c0c0c" font-weight="bold" stroke="#0c0c0c" stroke-width="0.36" textLength="11.00" lengthAdjust="spacingAndGlyphs">T5</text>
<text x="824.75" y="390.45" font-size="10.1" fill="#0c0c0c" font-weight="bold" stroke="#0c0c0c" stroke-width="0.36" textLength="11.00" lengthAdjust="spacingAndGlyphs">P3</text>
<text x="900.40" y="390.45" font-size="10.1" fill="#0c0c0c" font-weight="bold" stroke="#0c0c0c" stroke-width="0.36" textLength="11.00" lengthAdjust="spacingAndGlyphs">PZ</text>
<text x="976.05" y="390.45" font-size="10.1" fill="#0c0c0c" font-weight="bold" stroke="#0c0c0c" stroke-width="0.36" textLength="11.00" lengthAdjust="spacingAndGlyphs">P4</text>
<text x="1051.70" y="390.45" font-size="10.1" fill="#0c0c0c" font-weight="bold" stroke="#0c0c0c" stroke-width="0.36" textLength="11.00" lengthAdjust="spacingAndGlyphs">T6</text>
<text x="824.75" y="462.45" font-size="10.1" fill="#0c0c0c" font-weight="bold" stroke="#0c0c0c" stroke-width="0.36" textLength="11.00" lengthAdjust="spacingAndGlyphs">O1</text>
<text x="900.40" y="462.45" font-size="10.1" fill="#0c0c0c" font-weight="bold" stroke="#0c0c0c" stroke-width="0.36" textLength="11.00" lengthAdjust="spacingAndGlyphs">OZ</text>
<text x="976.05" y="462.45" font-size="10.1" fill="#0c0c0c" font-weight="bold" stroke="#0c0c0c" stroke-width="0.36" textLength="11.00" lengthAdjust="spacingAndGlyphs">O2</text>
</svg>

</body></html>
